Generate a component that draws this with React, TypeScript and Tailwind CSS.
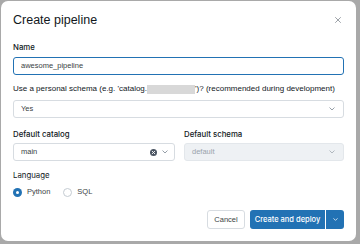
import { X, ChevronDown } from "lucide-react";

const FONT = { fontFamily: '"Liberation Sans", Arial, sans-serif' };
const LABEL_FONT = { fontFamily: 'Inter, "Liberation Sans", Arial, sans-serif' };

function Chevron({ className = "" }: { className?: string }) {
  return (
    <svg width="6" height="4" viewBox="0 0 6 4" className={className}>
      <path d="M0.8 0.8 L3 3 L5.2 0.8" fill="none" stroke="currentColor" strokeWidth="0.9" strokeLinecap="round" strokeLinejoin="round" />
    </svg>
  );
}

function ClearIcon() {
  return (
    <svg width="7" height="7" viewBox="0 0 7 7">
      <circle cx="3.5" cy="3.5" r="3.5" fill="#4b5562" />
      <path d="M2.2 2.2 L4.8 4.8 M4.8 2.2 L2.2 4.8" stroke="#fff" strokeWidth="0.9" strokeLinecap="round" />
    </svg>
  );
}

function Label({ children, className = "" }: { children: React.ReactNode; className?: string }) {
  return (
    <div
      className={`text-[7.8px] leading-[10px] font-medium text-[#11171c] whitespace-nowrap ${className}`}
      style={LABEL_FONT}
    >
      {children}
    </div>
  );
}

export default function App() {
  return (
    <div className="w-[360px] h-[244px] bg-[#a9a9a9] pt-[1px] pl-[1px] overflow-hidden" style={FONT}>
      <div className="w-[355px] h-[240px] bg-white rounded-[7px] px-[12px] pt-[11px] flex flex-col">
        <div className="flex items-center justify-between h-[16px]">
          <h1 className="text-[12.5px] leading-[16px] text-[#11171c]">Create pipeline</h1>
          <X size={10} strokeWidth={1.2} className="text-[#3a4450] mr-[1px]" />
        </div>

        <Label className="mt-[14px]">Name</Label>
        <div className="mt-[5px] h-[18px] border border-[#2272b4] rounded-[3px] px-[7px] flex items-center text-[7.5px] text-[#3a3f44]">
          awesome_pipeline
        </div>

        <div className="mt-[9px] text-[8px] leading-[10px] text-[#11171c] whitespace-nowrap flex items-center">
          <span>Use a personal schema (e.g. 'catalog.</span>
          <span className="inline-block w-[48px] h-[9px] bg-[#d8d8d8]" />
          <span>')? (recommended during development)</span>
        </div>
        <div className="mt-[6px] h-[18px] border border-[#d7dce1] rounded-[3px] pl-[7px] pr-[8px] flex items-center justify-between text-[7.5px] text-[#3a3f44]">
          <span>Yes</span>
          <Chevron className="text-[#8a949e]" />
        </div>

        <div className="mt-[11px] flex gap-[9px]">
          <div className="flex flex-col w-[162px]">
            <Label>Default catalog</Label>
            <div className="mt-[4px] h-[18px] border border-[#d7dce1] rounded-[3px] pl-[7px] pr-[6px] flex items-center text-[7.5px] text-[#3a3f44]">
              <span className="flex-1">main</span>
              <ClearIcon />
              <Chevron className="ml-[5px] text-[#8a949e]" />
            </div>
          </div>
          <div className="flex flex-col flex-1">
            <Label>Default schema</Label>
            <div className="mt-[4px] h-[18px] border border-[#e3e7eb] bg-[#eef1f4] rounded-[3px] pl-[7px] pr-[8px] flex items-center justify-between text-[7.5px] text-[#9aa3ac]">
              <span>default</span>
              <Chevron className="text-[#a9b1b9]" />
            </div>
          </div>
        </div>

        <Label className="mt-[9px] font-normal">Language</Label>
        <div className="mt-[7px] flex items-center text-[7.5px] leading-[10px] text-[#3a3f44]">
          <span className="w-[9px] h-[9px] rounded-full bg-[#2272b4] flex items-center justify-center">
            <span className="w-[3px] h-[3px] rounded-full bg-white" />
          </span>
          <span className="ml-[5px]">Python</span>
          <span className="ml-[13px] w-[9px] h-[9px] rounded-full border border-[#c4cbd2] bg-white" />
          <span className="ml-[5px]">SQL</span>
        </div>

        <div className="mt-[13px] flex justify-end items-center gap-[5px]">
          <button className="h-[19px] w-[38px] border border-[#d7dce1] rounded-[3px] text-[7.5px] text-[#3a3f44] bg-white">
            Cancel
          </button>
          <div className="flex gap-[1px]">
            <button
              className="h-[19px] w-[75px] bg-[#2272b4] rounded-l-[3px] text-[7.5px] font-medium text-white"
              style={LABEL_FONT}
            >
              Create and deploy
            </button>
            <button className="h-[19px] w-[18px] bg-[#2272b4] rounded-r-[3px] flex items-center justify-center text-white">
              <ChevronDown size={7} strokeWidth={2.5} />
            </button>
          </div>
        </div>
      </div>
    </div>
  );
}
